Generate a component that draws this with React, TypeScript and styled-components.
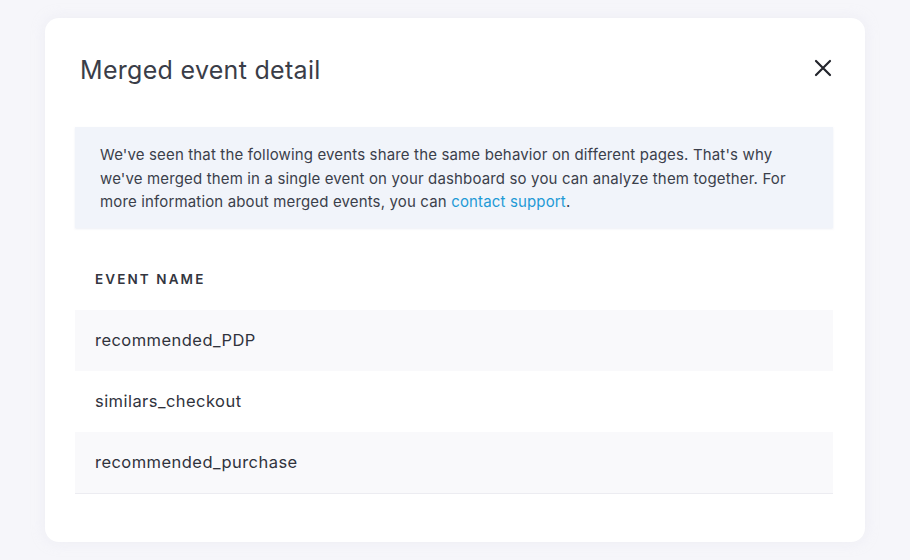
import React from 'react';
import styled, { createGlobalStyle } from 'styled-components';

const events = ['recommended_PDP', 'similars_checkout', 'recommended_purchase'];

const GlobalStyle = createGlobalStyle`
  html, body {
    margin: 0;
    padding: 0;
    background: #f6f6fa;
    font-family: Inter, 'Noto Sans', sans-serif;
  }
`;

function App() {
  return (
    <Page>
      <GlobalStyle />
      <Modal>
        <Header>
          <Title>Merged event detail</Title>
          <CloseButton aria-label='Close'>
            <svg width='18' height='18' viewBox='0 0 18 18'>
              <path
                d='M2 2 L16 16 M16 2 L2 16'
                stroke='#23252c'
                strokeWidth='2.2'
                strokeLinecap='round'
              />
            </svg>
          </CloseButton>
        </Header>
        <Notice>
          We've seen that the following events share the same behavior on
          different pages. That's why we've merged them in a single event on
          your dashboard so you can analyze them together. For more
          information about merged events, you can{' '}
          <SupportLink href='#'>contact support</SupportLink>.
        </Notice>
        <Table>
          <HeadCell>Event name</HeadCell>
          {events.map(function (name, i) {
            return (
              <Row key={name} $striped={i % 2 === 0}>
                {name}
              </Row>
            );
          })}
        </Table>
      </Modal>
    </Page>
  );
}

export default App;

const Page = styled.div({
  width: 910,
  height: 560,
  padding: '18px 0 0 45px',
  boxSizing: 'border-box',
});

const Modal = styled.div({
  width: 820,
  height: 524,
  boxSizing: 'border-box',
  background: '#ffffff',
  borderRadius: 14,
  padding: '0 32px 0 30px',
  boxShadow: '0 0 14px rgba(220, 222, 235, 0.35)',
});

const Header = styled.div({
  display: 'flex',
  alignItems: 'center',
  justifyContent: 'space-between',
  padding: '34px 1px 0 5px',
  height: 36,
});

const Title = styled.h2({
  margin: 0,
  fontSize: 25,
  lineHeight: '36px',
  fontWeight: 400,
  color: '#3a3d48',
  letterSpacing: 0.3,
});

const CloseButton = styled.button({
  border: 'none',
  background: 'transparent',
  padding: 0,
  width: 18,
  height: 18,
  display: 'flex',
  cursor: 'pointer',
  marginTop: -4,
});

const Notice = styled.p({
  margin: '39px 0 0',
  background: '#f1f4fa',
  padding: '16px 40px 14px 25px',
  fontSize: 15,
  lineHeight: '23.5px',
  letterSpacing: 0.15,
  color: '#3b3f4b',
  boxShadow: '0 1px 2px rgba(225, 228, 238, 0.6)',
});

const SupportLink = styled.a({
  color: '#1e9ad6',
  textDecoration: 'none',
});

const Table = styled.div({
  marginTop: 21,
  display: 'flex',
  flexDirection: 'column',
  borderBottom: '1px solid #ececf1',
});

const HeadCell = styled.div({
  height: 61,
  display: 'flex',
  alignItems: 'center',
  padding: '0 20px',
  fontSize: 13.5,
  fontWeight: 600,
  letterSpacing: 2.1,
  textTransform: 'uppercase',
  color: '#33363f',
});

const Row = styled.div<{ $striped: boolean }>(function (props) {
  return {
    height: 61,
    display: 'flex',
    alignItems: 'center',
    padding: '0 20px',
    fontSize: 16.5,
    letterSpacing: 0.45,
    color: '#30333d',
    background: props.$striped ? '#f9f9fb' : '#ffffff',
  };
});
